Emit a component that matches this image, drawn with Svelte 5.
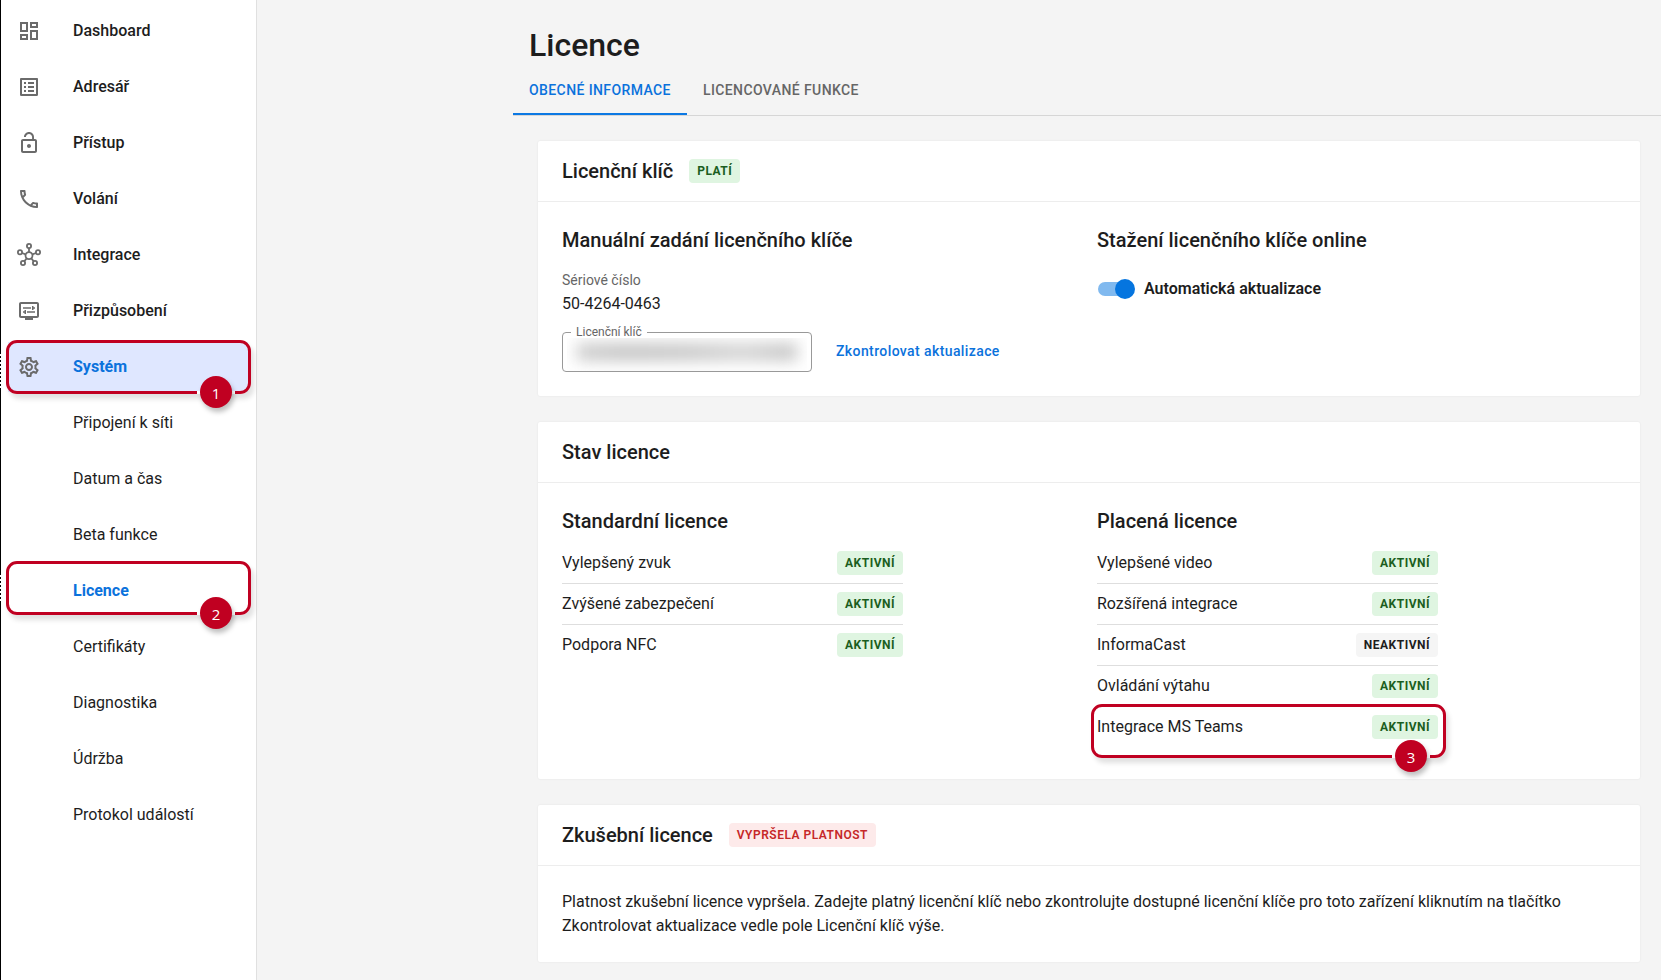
<script>
  const icons = {
    dashboard: 'M19 5v2h-4V5h4M9 5v6H5V5h4m10 8v6h-4v-6h4M9 17v2H5v-2h4M21 3h-8v6h8V3zM11 3H3v10h8V3zm10 8h-8v10h8V11zm-10 4H3v6h8v-6z',
    list: 'M11 7h6v2h-6zm0 4h6v2h-6zm0 4h6v2h-6zM7 7h2v2H7zm0 4h2v2H7zm0 4h2v2H7zM20.1 3H3.9c-.5 0-.9.4-.9.9v16.2c0 .4.4.9.9.9h16.2c.4 0 .9-.5.9-.9V3.9c0-.5-.5-.9-.9-.9zM19 19H5V5h14v14z',
    lock: 'M12 17c1.1 0 2-.9 2-2s-.9-2-2-2-2 .9-2 2 .9 2 2 2zm6-9h-1V6c0-2.76-2.24-5-5-5S7 3.24 7 6h1.9c0-1.71 1.39-3.1 3.1-3.1s3.1 1.39 3.1 3.1v2H6c-1.1 0-2 .9-2 2v10c0 1.1.9 2 2 2h12c1.1 0 2-.9 2-2V10c0-1.1-.9-2-2-2zm0 12H6V10h12v10z',
    phone: 'M6.54 5c.06.89.21 1.76.45 2.59l-1.2 1.2c-.41-1.2-.67-2.47-.76-3.79h1.51m9.86 12.02c.85.24 1.72.39 2.6.45v1.49c-1.32-.09-2.59-.35-3.8-.75l1.2-1.19M7.5 3H4c-.55 0-1 .45-1 1 0 9.39 7.61 17 17 17 .55 0 1-.45 1-1v-3.49c0-.55-.45-1-1-1-1.24 0-2.45-.2-3.57-.57-.1-.04-.21-.05-.31-.05-.26 0-.51.1-.71.29l-2.2 2.2c-2.83-1.45-5.15-3.76-6.59-6.59l2.2-2.2c.28-.28.36-.67.25-1.02C8.7 6.45 8.5 5.25 8.5 4c0-.55-.45-1-1-1z',
    display: 'M20 3H4c-1.11 0-2 .89-2 2v12c0 1.1.89 2 2 2h4v2h8v-2h4c1.1 0 2-.9 2-2V5c0-1.11-.9-2-2-2zm0 14H4V5h16v12zM6 8.25h8v1.5H6zM16.5 9.75H18v-1.5h-1.5V7H15v4h1.5zM10 12.25h8v1.5h-8zM7.5 15H9v-4H7.5v1.25H6v1.5h1.5z',
    gear: 'M19.43 12.98c.04-.32.07-.64.07-.98 0-.34-.03-.66-.07-.98l2.11-1.65c.19-.15.24-.42.12-.64l-2-3.46c-.09-.16-.26-.25-.44-.25-.06 0-.12.01-.17.03l-2.49 1c-.52-.4-1.08-.73-1.69-.98l-.38-2.65C14.46 2.18 14.25 2 14 2h-4c-.25 0-.46.18-.49.42l-.38 2.65c-.61.25-1.17.59-1.69.98l-2.49-1c-.06-.02-.12-.03-.18-.03-.17 0-.34.09-.43.25l-2 3.46c-.13.22-.07.49.12.64l2.11 1.65c-.04.32-.07.65-.07.98 0 .33.03.66.07.98l-2.11 1.65c-.19.15-.24.42-.12.64l2 3.46c.09.16.26.25.44.25.06 0 .12-.01.17-.03l2.49-1c.52.4 1.08.73 1.69.98l.38 2.65c.03.24.24.42.49.42h4c.25 0 .46-.18.49-.42l.38-2.65c.61-.25 1.17-.59 1.69-.98l2.49 1c.06.02.12.03.18.03.17 0 .34-.09.43-.25l2-3.46c.12-.22.07-.49-.12-.64l-2.11-1.65zm-1.98-1.71c.04.31.05.52.05.73 0 .21-.02.43-.05.73l-.14 1.13.89.7 1.08.84-.7 1.21-1.27-.51-1.04-.42-.9.68c-.43.32-.84.56-1.25.73l-1.06.43-.16 1.13-.2 1.35h-1.4l-.19-1.35-.16-1.13-1.06-.43c-.43-.18-.83-.41-1.23-.71l-.91-.7-1.06.43-1.27.51-.7-1.21 1.08-.84.89-.7-.14-1.13c-.03-.31-.05-.54-.05-.74s.02-.43.05-.73l.14-1.13-.89-.7-1.08-.84.7-1.21 1.27.51 1.04.42.9-.68c.43-.32.84-.56 1.25-.73l1.06-.43.16-1.13.2-1.35h1.39l.19 1.35.16 1.13 1.06.43c.43.18.83.41 1.23.71l.91.7 1.06-.43 1.27-.51.7 1.21-1.07.85-.89.7.14 1.13zM12 8c-2.21 0-4 1.79-4 4s1.79 4 4 4 4-1.79 4-4-1.79-4-4-4zm0 6c-1.1 0-2-.9-2-2s.9-2 2-2 2 .9 2 2-.9 2-2 2z'
  };
  const nav = [
    { label: 'Dashboard', icon: 'dashboard' },
    { label: 'Adresář', icon: 'list' },
    { label: 'Přístup', icon: 'lock' },
    { label: 'Volání', icon: 'phone' },
    { label: 'Integrace', icon: 'hub' },
    { label: 'Přizpůsobení', icon: 'display' },
    { label: 'Systém', icon: 'gear', active: true, mark: 1 },
    { label: 'Připojení k síti', sub: true },
    { label: 'Datum a čas', sub: true },
    { label: 'Beta funkce', sub: true },
    { label: 'Licence', sub: true, current: true, mark: 2 },
    { label: 'Certifikáty', sub: true },
    { label: 'Diagnostika', sub: true },
    { label: 'Údržba', sub: true },
    { label: 'Protokol událostí', sub: true }
  ];
  const groups = [
    { title: 'Standardní licence', rows: [['Vylepšený zvuk', true], ['Zvýšené zabezpečení', true], ['Podpora NFC', true]] },
    { title: 'Placená licence', rows: [['Vylepšené video', true], ['Rozšířená integrace', true], ['InformaCast', false], ['Ovládání výtahu', true], ['Integrace MS Teams', true, 3]] }
  ];
</script>

{#snippet callout(n)}
  <div class="callout c{n}"><span class="gap"></span><span class="num">{n}</span></div>
  {#if n < 3}<span class="edge"></span>{/if}
{/snippet}

<div class="page">
  <nav class="sidebar">
    {#each nav as item}
      <div class="item" class:sub={item.sub} class:active={item.active} class:current={item.current}>
        <span class="icon">
          {#if item.icon === 'hub'}
            <svg viewBox="0 0 24 24" fill="none" stroke="currentColor" stroke-width="1.8">
              <circle cx="12" cy="12.6" r="3.5" />
              <circle cx="12" cy="3" r="2.1" /><circle cx="3" cy="9.3" r="2.1" /><circle cx="21" cy="9.3" r="2.1" />
              <circle cx="6" cy="20" r="2.1" /><circle cx="18" cy="20" r="2.1" />
              <path d="M12 5v4M5 10l3.6 1.4M19 10l-3.6 1.4M7.3 18.3l2.4-2.9M16.7 18.3l-2.4-2.9" />
            </svg>
          {:else if item.icon}
            <svg viewBox="0 0 24 24" fill="currentColor"><path d={icons[item.icon]} /></svg>
          {/if}
        </span>
        <span class="label">{item.label}</span>
        {#if item.mark}{@render callout(item.mark)}{/if}
      </div>
    {/each}
  </nav>

  <main>
    <h1>Licence</h1>
    <div class="tabs">
      <div class="tab selected">OBECNÉ INFORMACE</div>
      <div class="tab">LICENCOVANÉ FUNKCE</div>
    </div>

    <div class="cards">
      <section class="card key">
        <header><h2>Licenční klíč</h2><span class="chip ok">PLATÍ</span></header>
        <div class="columns">
          <div>
            <h3>Manuální zadání licenčního klíče</h3>
            <div class="serial-label">Sériové číslo</div>
            <div class="serial">50-4264-0463</div>
            <div class="key-row">
              <fieldset><legend>Licenční klíč</legend><div class="mask"><div class="hidden-key"></div></div></fieldset>
              <span class="link">Zkontrolovat aktualizace</span>
            </div>
          </div>
          <div>
            <h3>Stažení licenčního klíče online</h3>
            <div class="switch-row"><span class="switch"><span class="thumb"></span></span><span>Automatická aktualizace</span></div>
          </div>
        </div>
      </section>

      <section class="card state">
        <header><h2>Stav licence</h2></header>
        <div class="columns">
          {#each groups as group}
            <div>
              <h3>{group.title}</h3>
              <div class="rows">
                {#each group.rows as [name, on, mark]}
                  <div class="row">
                    <span>{name}</span>
                    <span class="chip" class:ok={on}>{on ? 'AKTIVNÍ' : 'NEAKTIVNÍ'}</span>
                    {#if mark}{@render callout(mark)}{/if}
                  </div>
                {/each}
              </div>
            </div>
          {/each}
        </div>
      </section>

      <section class="card trial">
        <header><h2>Zkušební licence</h2><span class="chip bad">VYPRŠELA PLATNOST</span></header>
        <p>Platnost zkušební licence vypršela. Zadejte platný licenční klíč nebo zkontrolujte dostupné licenční klíče pro toto zařízení kliknutím na tlačítko Zkontrolovat aktualizace vedle pole Licenční klíč výše.</p>
      </section>
    </div>
  </main>
</div>

<style>
  :global(body) { background: #f4f4f4; overflow: hidden; }
  .page { display: flex; width: 1661px; height: 980px; overflow: hidden; font: 400 16px/24px Roboto, sans-serif; color: #1d1d1d; background: #f4f4f4; }
  .page * { box-sizing: border-box; }
  .sidebar { width: 257px; flex: none; background: #fff; border-left: 1px solid #000; border-right: 1px solid #e0e0e0; padding-top: 2px; }
  .item { position: relative; height: 56px; display: flex; align-items: center; padding-left: 16px; gap: 32px; font-weight: 500; }
  .icon { width: 24px; height: 24px; color: #6b6b6b; margin-top: 2px; }
  .icon svg { display: block; width: 24px; height: 24px; overflow: visible; }
  .label { margin-top: 2px; }
  .sub { font-weight: 400; }
  .active { background: linear-gradient(#dfe7ff, #dfe7ff) 7px 4px / 240px 50px no-repeat; }
  .active .label, .current .label { color: #0b72dc; font-weight: 700; }

  .callout { position: absolute; border: 3px solid #c00021; border-radius: 11px; box-shadow: 3px 5px 5px rgba(0, 0, 0, .12); }
  .c1 { left: 5px; top: 2px; width: 245px; height: 54px; }
  .c2 { left: 5px; top: -1px; width: 245px; height: 54px; }
  .c3 { left: -6px; top: -3px; width: 355px; height: 54px; }
  .gap { position: absolute; right: 13px; bottom: -3px; width: 38px; height: 3px; background: #fff; }
  .num { position: absolute; right: 16px; bottom: -17px; width: 32px; height: 32px; border-radius: 50%; background: #c00021; color: #fff; font: 500 15px/35px "Open Sans", sans-serif; text-align: center; box-shadow: 2px 4px 5px rgba(0, 0, 0, .25); }
  .edge { position: absolute; left: -1px; top: 16px; width: 1px; height: 34px; background: repeating-linear-gradient(#fff 0 2px, #000 2px 4px); }
  .current .edge { top: 13px; height: 28px; }

  main { flex: 1; padding: 25px 0 0 256px; min-width: 0; }
  h1, h2, h3, p { margin: 0; font-weight: 500; }
  h1 { font-size: 32px; line-height: 40px; padding-left: 16px; }
  .tabs { display: flex; height: 51px; border-bottom: 1px solid #d6d6d6; font: 500 14px/20px Roboto, sans-serif; letter-spacing: .4px; color: #666; }
  .tab { padding: 15px 16px 0; height: 50px; }
  .selected { color: #0b72dc; border-bottom: 2px solid #0b78e3; }
  .cards { display: flex; flex-direction: column; gap: 26px; padding: 25px 21px 0 25px; }
  .card { background: #fff; border-radius: 2px; box-shadow: 0 0 2px rgba(0, 0, 0, .08); }
  .key { height: 255px; }
  .state { height: 357px; }
  .trial { height: 157px; }
  header { height: 61px; padding: 0 24px; display: flex; align-items: center; gap: 16px; border-bottom: 1px solid #ededed; }
  h2, h3 { font-size: 20px; line-height: 28px; }
  .chip { height: 24px; padding: 0 8px; border-radius: 4px; font: 700 12px/24px Roboto, sans-serif; letter-spacing: .5px; background: #f5f5f5; color: #1d1d1d; }
  .ok { background: #dff5e1; color: #1b5e20; }
  .bad { background: #fdeaea; color: #c62828; font-weight: 600; }
  .columns { display: grid; grid-template-columns: 535px 1fr; padding: 24px 24px 0; }
  .serial-label { font-size: 14px; line-height: 20px; color: #666; margin-top: 16px; }
  .serial { line-height: 24px; margin-top: 2px; }
  .key-row { display: flex; align-items: center; gap: 24px; margin-top: 10px; }
  fieldset { margin: 0; width: 250px; height: 46px; border: 1px solid #999; border-radius: 4px; padding: 0 4px; }
  legend { font-size: 12px; line-height: 12px; color: #666; margin-left: 4px; padding: 0 5px; }
  .mask { height: 33px; overflow: hidden; padding: 6px 10px 0; }
  .hidden-key { height: 16px; background: linear-gradient(90deg, #c8c8c8, #bebebe 22%, #c2c2c2 50%, #cfcfcf 75%, #bebebe); filter: blur(8px); }
  .link { color: #0b72dc; font-weight: 500; font-size: 14px; letter-spacing: .4px; padding-top: 3px; }
  .switch-row { display: flex; align-items: center; gap: 9px; height: 24px; margin-top: 23px; font-weight: 600; }
  .switch { width: 38px; height: 20px; display: flex; align-items: center; justify-content: flex-end; position: relative; }
  .switch::before { content: ""; position: absolute; left: 1px; top: 3px; width: 34px; height: 14px; border-radius: 7px; background: #80b9ef; }
  .thumb { position: relative; width: 20px; height: 20px; border-radius: 50%; background: #0575df; }
  .rows { width: 341px; margin-top: 8px; }
  .row { position: relative; height: 41px; display: flex; align-items: center; justify-content: space-between; border-bottom: 1px solid #dedede; }
  .row:last-child { border-bottom: 0; height: 40px; }
  p { font-weight: 400; padding: 24px 24px 0; }
</style>
